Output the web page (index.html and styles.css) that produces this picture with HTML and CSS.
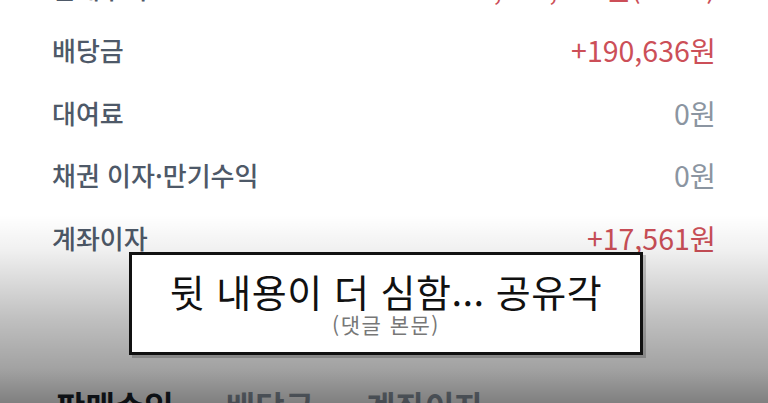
FILE: index.html
```html
<!DOCTYPE html>
<html lang="ko">
<head>
<meta charset="utf-8">
<link rel="stylesheet" href="styles.css">
</head>
<body>
<div class="screen">
  <div class="list">
    <div class="row"><span class="label">판매수익</span><span class="value plus">+3,733,542원(8.5%)</span></div>
    <div class="row"><span class="label">배당금</span><span class="value plus">+190,636원</span></div>
    <div class="row"><span class="label">대여료</span><span class="value zero">0원</span></div>
    <div class="row"><span class="label">채권 이자·만기수익</span><span class="value zero">0원</span></div>
    <div class="row"><span class="label">계좌이자</span><span class="value plus">+17,561원</span></div>
  </div>
  <div class="tabs">
    <span class="tab active">판매수익</span>
    <span class="tab">배당금</span>
    <span class="tab">계좌이자</span>
  </div>
  <div class="shade"></div>
  <div class="caption">
    <div class="caption-main">뒷 내용이 더 심함... 공유각</div>
    <div class="caption-sub">(댓글 본문)</div>
  </div>
</div>
</body>
</html>
```
FILE: styles.css
```css
* { box-sizing: border-box; }
html, body { margin: 0; padding: 0; }
body {
  width: 768px;
  height: 403px;
  overflow: hidden;
  background: #ffffff;
  font-family: "Noto Sans CJK KR", "Noto Sans", sans-serif;
}
.screen {
  position: relative;
  width: 768px;
  height: 403px;
  overflow: hidden;
  padding: 0 52px 0 52px;
}
.list {
  margin-top: -44px;
}
.row {
  height: 62.5px;
  display: flex;
  align-items: center;
  justify-content: space-between;
}
.label {
  font-size: 26px;
  font-weight: 500;
  color: #4e5968;
}
.value {
  font-size: 28.5px;
  font-weight: 400;
  letter-spacing: 0;
}
.value.plus { color: #cc4f58; }
.value.zero { color: #8b95a1; }
.tabs {
  display: flex;
  gap: 52px;
  margin-top: 114px;
  padding-left: 4px;
}
.tab {
  font-size: 32px;
  font-weight: 700;
  color: #8b95a1;
  line-height: 44px;
}
.tab.active { color: #191f28; }
.shade {
  position: absolute;
  left: 0;
  top: 0;
  width: 768px;
  height: 403px;
  background: linear-gradient(to bottom,
    rgba(0,0,0,0) 0px,
    rgba(0,0,0,0) 215px,
    rgba(0,0,0,0.06) 250px,
    rgba(0,0,0,0.25) 320px,
    rgba(0,0,0,0.37) 370px,
    rgba(0,0,0,0.5) 403px);
  pointer-events: none;
}
.caption {
  position: absolute;
  left: 129px;
  top: 252px;
  width: 514px;
  height: 103px;
  background: #ffffff;
  border: 3px solid #111111;
  box-shadow: 3px 3px 0 rgba(0,0,0,0.2);
  display: flex;
  flex-direction: column;
  align-items: center;
  padding-top: 15px;
}
.caption-main {
  font-size: 38px;
  font-weight: 400;
  color: #111111;
  line-height: 42px;
  letter-spacing: 0.5px;
}
.caption-sub {
  font-size: 21px;
  font-weight: 400;
  color: #777777;
  line-height: 24px;
  letter-spacing: 1.5px;
  margin-top: 0;
}
```
